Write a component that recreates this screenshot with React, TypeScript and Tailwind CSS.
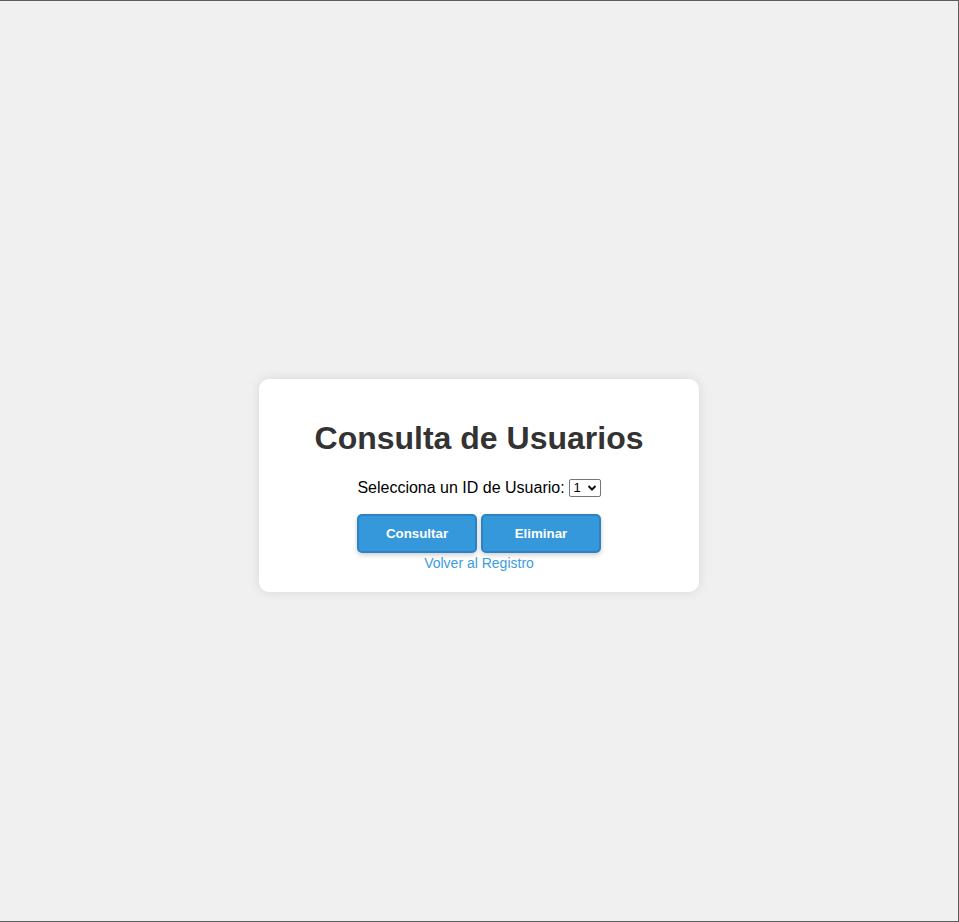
import { useState } from "react";

export default function App() {
  const [userId, setUserId] = useState("1");

  return (
    <div className="flex h-[922px] w-full justify-center border-t border-r border-b border-[#5c5c5c] bg-[#f0f0f0] pt-[378px] font-['Liberation_Sans',Arial,sans-serif]">
      <div className="h-[213px] w-[440px] rounded-[10px] bg-white px-5 pt-5 text-center shadow-[0_0_12px_rgba(0,0,0,0.1)]">
        <h1 className="mt-[21px] mb-[21px] text-[32px] leading-[37px] font-bold text-[#333]">
          Consulta de Usuarios
        </h1>

        <div className="flex h-5 items-center justify-center gap-1 text-base text-black">
          <label htmlFor="userId">Selecciona un ID de Usuario:</label>
          <span className="relative inline-flex">
            <select
              id="userId"
              value={userId}
              onChange={(e) => setUserId(e.target.value)}
              className="h-[18px] w-[32px] appearance-none rounded-[2px] border border-[#767676] bg-white pl-[4px] text-[13px] leading-[16px] text-black outline-none"
            >
              <option value="1">1</option>
              <option value="2">2</option>
              <option value="3">3</option>
            </select>
            <svg
              className="pointer-events-none absolute top-[5px] right-[4px]"
              width="10"
              height="8"
              viewBox="0 0 10 8"
              fill="none"
            >
              <path d="M1.5 2 L5 5.5 L8.5 2" stroke="#111" strokeWidth="2" />
            </svg>
          </span>
        </div>

        <div className="mt-4 flex justify-center gap-1">
          <button
            type="button"
            className="h-[39px] w-[120px] rounded-[5px] border-2 border-[#2c82c2] bg-[#3498db] text-[13.33px] font-bold text-white shadow-[0_2px_5px_rgba(0,0,0,0.2)]"
          >
            Consultar
          </button>
          <button
            type="button"
            className="h-[39px] w-[120px] rounded-[5px] border-2 border-[#2c82c2] bg-[#3498db] text-[13.33px] font-bold text-white shadow-[0_2px_5px_rgba(0,0,0,0.2)]"
          >
            Eliminar
          </button>
        </div>

        <a href="#" className="block text-sm leading-5 text-[#3d9be0]">
          Volver al Registro
        </a>
      </div>
    </div>
  );
}
